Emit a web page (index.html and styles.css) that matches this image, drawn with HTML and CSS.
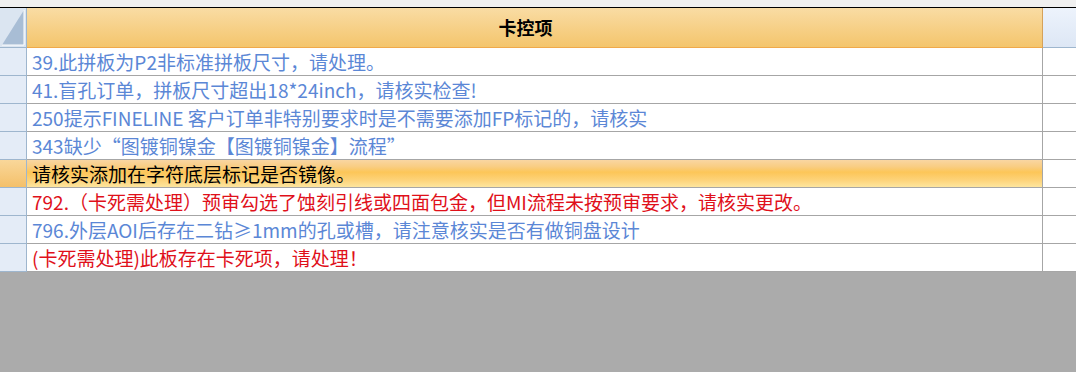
FILE: index.html
```html
<!DOCTYPE html>
<html>
<head>
<meta charset="utf-8">
<link rel="stylesheet" href="styles.css">
</head>
<body>
<div class="sheet">
  <div class="topstrip"></div>
  <div class="row head">
    <div class="rh corner">
      <svg width="26" height="39" viewBox="0 0 26 39"><polygon points="24,2 24,37 2,37" fill="#a8bdd5"/><polyline points="2,37 24,37 24,2" fill="none" stroke="#ffffff" stroke-width="1"/></svg>
    </div>
    <div class="cell main hcell">卡控项</div>
    <div class="cell extra hextra"></div>
  </div>
  <div class="row"><div class="rh"></div><div class="cell main blue">39.此拼板为P2非标准拼板尺寸，请处理。</div><div class="cell extra"></div></div>
  <div class="row"><div class="rh"></div><div class="cell main blue">41.盲孔订单，拼板尺寸超出18*24inch，请核实检查!</div><div class="cell extra"></div></div>
  <div class="row"><div class="rh"></div><div class="cell main blue">250提示FINELINE 客户订单非特别要求时是不需要添加FP标记的，请核实</div><div class="cell extra"></div></div>
  <div class="row"><div class="rh"></div><div class="cell main blue">343缺少“图镀铜镍金【图镀铜镍金】流程”</div><div class="cell extra"></div></div>
  <div class="row sel"><div class="rh"></div><div class="cell main black">请核实添加在字符底层标记是否镜像。</div><div class="cell extra"></div></div>
  <div class="row"><div class="rh"></div><div class="cell main red">792.（卡死需处理）预审勾选了蚀刻引线或四面包金，但MI流程未按预审要求，请核实更改。</div><div class="cell extra"></div></div>
  <div class="row"><div class="rh"></div><div class="cell main blue">796.外层AOI后存在二钻≥1mm的孔或槽，请注意核实是否有做铜盘设计</div><div class="cell extra"></div></div>
  <div class="row"><div class="rh"></div><div class="cell main red">(卡死需处理)此板存在卡死项，请处理！</div><div class="cell extra"></div></div>
</div>
</body>
</html>
```

FILE: styles.css
```css
html, body {
  margin: 0;
  padding: 0;
}
body {
  width: 1076px;
  height: 372px;
  background: #ababab;
  font-family: "Noto Sans CJK SC", "Noto Sans", sans-serif;
  overflow: hidden;
}
.sheet {
  display: flex;
  flex-direction: column;
}
.topstrip {
  height: 7px;
  background: #f0f0f0;
  border-bottom: 1px solid #000;
}
.row {
  display: flex;
  height: 28px;
  background: #fff;
}
.rh {
  width: 26px;
  flex: none;
  background: #e4ecf7;
  border-right: 1px solid #9eb6ce;
  border-bottom: 1px solid #9eb6ce;
  box-sizing: content-box;
  height: 27px;
}
.cell {
  box-sizing: border-box;
  height: 28px;
  border-bottom: 1px solid #a6a6a6;
}
.main {
  width: 1016px;
  flex: none;
  border-right: 1px solid #a6a6a6;
  padding-left: 5px;
  font-size: 19px;
  line-height: 27px;
  white-space: nowrap;
  overflow: hidden;
}
.extra {
  flex: 1;
}
.blue { color: #5b87d6; }
.red { color: #e0101a; }
.black { color: #000; }

.head {
  height: 40px;
}
.head .rh {
  height: 39px;
  background: #dbe5f1;
  border-right: 1px solid #9eb6ce;
  border-bottom: 1px solid #9eb6ce;
}
.corner svg {
  display: block;
}
.hcell {
  height: 40px;
  background: linear-gradient(#f9dca4, #f4c56c);
  border-bottom: 1px solid #f0a94a;
  border-right: 1px solid #d6a25a;
  text-align: center;
  font-weight: bold;
  font-size: 18px;
  line-height: 39px;
  color: #000;
  padding-left: 0;
  padding-right: 18px;
}
.hextra {
  height: 40px;
  background: linear-gradient(#edf3fc, #dde7f5);
  border-bottom: 1px solid #9eb6ce;
}
.sel .rh {
  background: linear-gradient(#f9d79a, #f4c06a);
}
.sel .main {
  background: linear-gradient(#f9d6a2 0%, #f9cd82 25%, #fcc658 45%, #fdd37a 75%, #fde59e 100%);
}
```
